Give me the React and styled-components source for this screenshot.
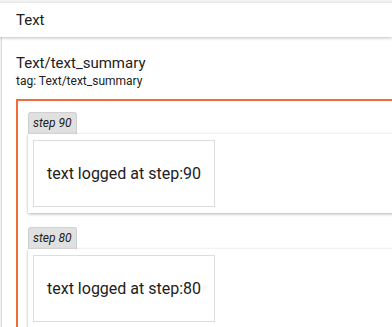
import styled, { createGlobalStyle } from "styled-components";

const Global = createGlobalStyle`
  body {
    margin: 0;
    background: #fff;
    font-family: Roboto, "Liberation Sans", sans-serif;
    color: #212121;
    overflow: hidden;
  }
`;

const Page = styled.div`
  padding-top: 3px;
  background: #f2f2f2;
  height: 327px;
  overflow: hidden;
`;

const Header = styled.div`
  height: 34px;
  display: flex;
  align-items: center;
  padding-left: 16px;
  background: #fff;
  font-size: 15px;
  box-shadow: 0 1px 3px rgba(0, 0, 0, 0.25);
  position: relative;
  z-index: 1;
`;

const Card = styled.div`
  margin-left: 1px;
  border-left: 1px solid #dcdcdc;
  background: #fff;
  padding: 17px 0 0 14px;
  height: 100%;
`;

const Title = styled.div`
  font-size: 15px;
  line-height: 18px;
`;

const Tag = styled.div`
  font-size: 12px;
  line-height: 14px;
  margin-top: 2px;
`;

const Frame = styled.div`
  margin-top: 11px;
  width: 420px;
  border: 2px solid #f26b3d;
  border-right: none;
  padding: 11px 0 0 10px;
`;

const Entry = styled.div`
  margin-bottom: 14px;
`;

const StepLabel = styled.div`
  width: fit-content;
  height: 22px;
  box-sizing: border-box;
  padding: 0 4px;
  line-height: 21px;
  background: #e0e0e0;
  border: 1px solid #cfcfcf;
  border-bottom: none;
  border-radius: 3px 3px 0 0;
  font-size: 12px;
  font-style: italic;
`;

const Panel = styled.div`
  background: #fff;
  padding: 6px 5px 6px 5px;
  box-shadow: 0 1px 3px rgba(0, 0, 0, 0.3);
`;

const Body = styled.div`
  width: 182px;
  height: 67px;
  box-sizing: border-box;
  border: 1px solid #dddddd;
  display: flex;
  align-items: center;
  padding-left: 13px;
  font-size: 16px;
`;

const logs = [90, 80];

export default function App() {
  return (
    <>
      <Global />
      <Page>
        <Header>Text</Header>
        <Card>
          <Title>Text/text_summary</Title>
          <Tag>tag: Text/text_summary</Tag>
          <Frame>
            {logs.map((s) => (
              <Entry key={s}>
                <StepLabel>step {s}</StepLabel>
                <Panel>
                  <Body>text logged at step:{s}</Body>
                </Panel>
              </Entry>
            ))}
          </Frame>
        </Card>
      </Page>
    </>
  );
}
